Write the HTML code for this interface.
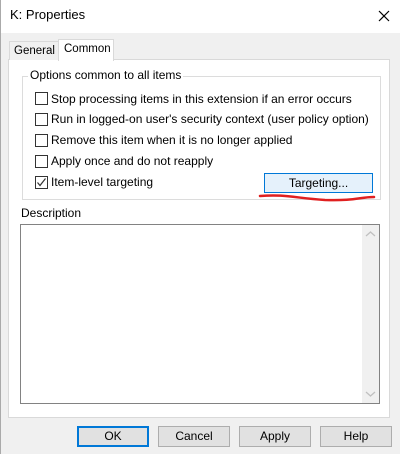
<!DOCTYPE html>
<html><head><style>
*{margin:0;padding:0;box-sizing:border-box}
body{width:400px;height:454px;background:#f0f0f0;position:relative;overflow:hidden;font-family:"Liberation Sans",sans-serif;font-size:12px;color:#000}
.a{position:absolute}
.cb{position:absolute;left:35px;width:13px;height:13px;border:1px solid #333;background:#fff}
.lb{position:absolute;left:51px;white-space:nowrap}
.btn{position:absolute;top:426px;width:72px;height:21px;background:#e1e1e1;border:1px solid #adadad;text-align:center;line-height:19px}
</style></head><body>
<div class="a" style="left:0;top:0;width:400px;height:33px;background:#fff"></div>
<div class="a" style="left:0;top:0;width:1px;height:454px;background:#aaa"></div>
<div class="a" style="left:10px;top:7px;font-size:13px">K: Properties</div>
<svg class="a" style="left:378px;top:10px" width="12" height="12"><path d="M1 1L11 11M11 1L1 11" stroke="#000" stroke-width="1.2"/></svg>
<div class="a" style="left:8px;top:59px;width:382px;height:359px;background:#fff;border:1px solid #d9d9d9"></div>
<div class="a" style="left:9px;top:41px;width:50px;height:19px;border:1px solid #d9d9d9;border-bottom:none;background:#f0f0f0;padding:3px 0 0 4px;font-size:11.5px">General</div>
<div class="a" style="left:58px;top:39px;width:56px;height:22px;border:1px solid #d9d9d9;border-bottom:none;background:#fff;padding:3px 0 0 5px;font-size:11.5px">Common</div>
<div class="a" style="left:22px;top:76px;width:359px;height:124px;border:1px solid #dcdcdc"></div>
<div class="a" style="left:28px;top:68px;background:#fff;padding:0 2px">Options common to all items</div>
<div class="cb" style="top:92px"></div><div class="lb" style="top:92px">Stop processing items in this extension if an error occurs</div>
<div class="cb" style="top:113px"></div><div class="lb" style="top:112px">Run in logged-on user's security context (user policy option)</div>
<div class="cb" style="top:134px"></div><div class="lb" style="top:133px">Remove this item when it is no longer applied</div>
<div class="cb" style="top:155px"></div><div class="lb" style="top:154px">Apply once and do not reapply</div>
<div class="cb" style="top:176px"></div>
<svg class="a" style="left:36px;top:177px" width="11" height="11"><path d="M1.5 5.5L4 8.5L9.5 1.5" stroke="#333" fill="none" stroke-width="1.2"/></svg>
<div class="lb" style="top:175px">Item-level targeting</div>
<div class="a" style="left:264px;top:173px;width:109px;height:20px;background:#e5f1fb;border:1px solid #0078d7;text-align:center;line-height:18px">Targeting...</div>
<svg class="a" style="left:255px;top:190px" width="125" height="16"><path d="M5 6C30 4 40 8 70 10C100 11 105 7 119 7" stroke="#e02020" stroke-width="2.5" fill="none" stroke-linecap="round"/></svg>
<div class="a" style="left:21px;top:206px">Description</div>
<div class="a" style="left:20px;top:224px;width:360px;height:180px;border:1px solid #828282;background:#fff"></div>
<div class="a" style="left:362px;top:225px;width:17px;height:178px;background:#f0f0f0"></div>
<svg class="a" style="left:365px;top:230px" width="11" height="8"><path d="M1 6L5.5 2L10 6" stroke="#c0c0c0" fill="none" stroke-width="1.3"/></svg>
<svg class="a" style="left:365px;top:390px" width="11" height="8"><path d="M1 2L5.5 6L10 2" stroke="#c0c0c0" fill="none" stroke-width="1.3"/></svg>
<div class="btn" style="left:77px;border:2px solid #0078d7;line-height:17px">OK</div>
<div class="btn" style="left:158px">Cancel</div>
<div class="btn" style="left:239px">Apply</div>
<div class="btn" style="left:320px">Help</div>
</body></html>
